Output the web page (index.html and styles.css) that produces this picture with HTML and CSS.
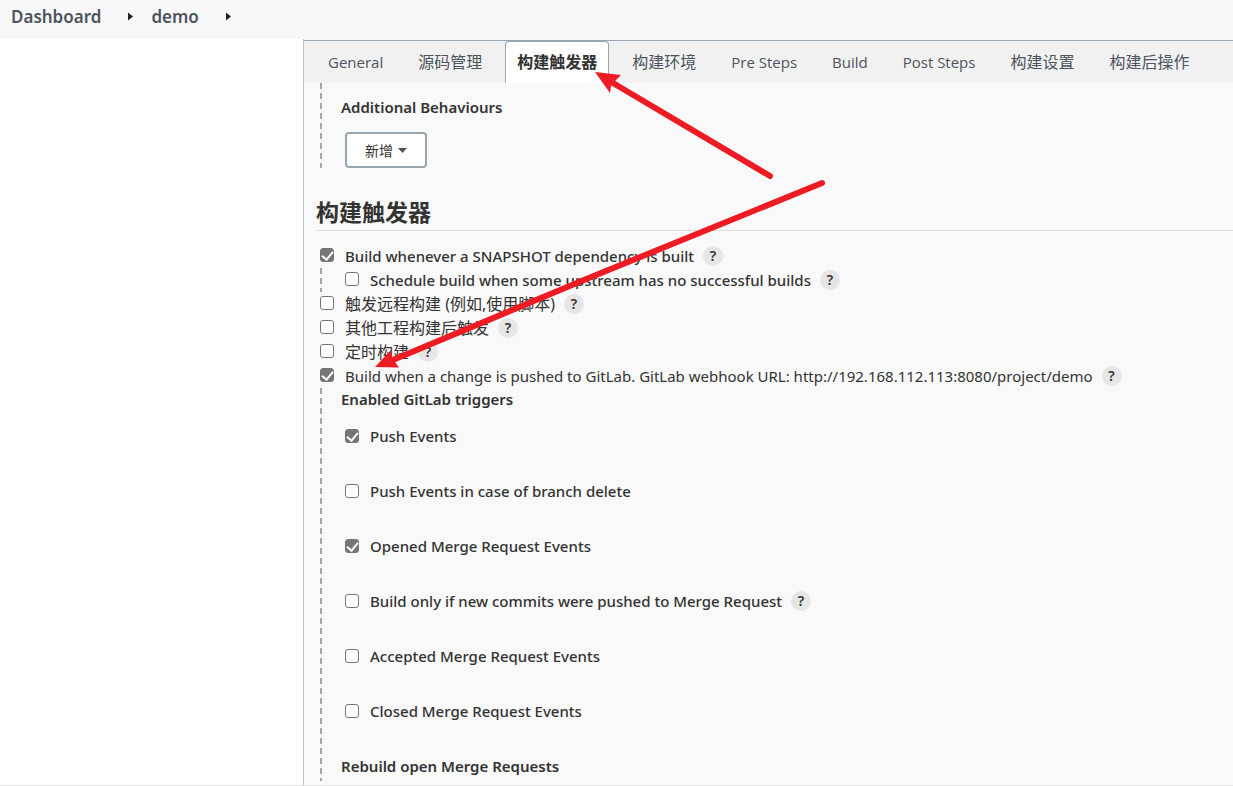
FILE: index.html
```html
<!DOCTYPE html>
<html lang="zh-CN">
<head>
<meta charset="utf-8">
<title>demo Config</title>
<meta name="viewport" content="width=device-width, initial-scale=1">
<link rel="stylesheet" href="styles.css">
</head>
<body>
<nav class="breadcrumbs">
  <a href="#">Dashboard</a>
  <svg class="crumb-arrow" viewBox="0 0 5 8" aria-hidden="true"><path d="M0 0L5 4L0 8Z"/></svg>
  <a href="#">demo</a>
  <svg class="crumb-arrow" viewBox="0 0 5 8" aria-hidden="true"><path d="M0 0L5 4L0 8Z"/></svg>
</nav>
<div class="page">
  <aside class="side"></aside>
  <main class="config">
    <nav class="tabs">
      <a class="tab" href="#">General</a>
      <a class="tab cjk" href="#">源码管理</a>
      <a class="tab cjk active" href="#">构建触发器</a>
      <a class="tab cjk" href="#">构建环境</a>
      <a class="tab" href="#">Pre Steps</a>
      <a class="tab" href="#">Build</a>
      <a class="tab" href="#">Post Steps</a>
      <a class="tab cjk" href="#">构建设置</a>
      <a class="tab cjk" href="#">构建后操作</a>
    </nav>
    <section class="group behaviours">
      <h3 class="group-title">Additional Behaviours</h3>
      <button class="add" type="button">新增<svg class="caret" viewBox="0 0 9 5" aria-hidden="true"><path d="M0 0H9L4.5 5Z"/></svg></button>
    </section>
    <section class="triggers">
      <h2 class="section-title">构建触发器</h2>
      <div class="row"><input class="check" type="checkbox" id="snapshot" checked><label for="snapshot">Build whenever a SNAPSHOT dependency is built</label><button class="help" type="button">?</button></div>
      <div class="group">
        <div class="row nested"><input class="check" type="checkbox" id="upstream"><label for="upstream">Schedule build when some upstream has no successful builds</label><button class="help" type="button">?</button></div>
      </div>
      <div class="row cjk"><input class="check" type="checkbox" id="remote"><label for="remote">触发远程构建 (例如,使用脚本)</label><button class="help" type="button">?</button></div>
      <div class="row cjk"><input class="check" type="checkbox" id="after"><label for="after">其他工程构建后触发</label><button class="help" type="button">?</button></div>
      <div class="row cjk"><input class="check" type="checkbox" id="timer"><label for="timer">定时构建</label><button class="help" type="button">?</button></div>
      <div class="row"><input class="check" type="checkbox" id="gitlab" checked><label class="webhook" for="gitlab">Build when a change is pushed to GitLab. GitLab webhook URL: http://192.168.112.113:8080/project/demo</label><button class="help" type="button">?</button></div>
      <div class="group last">
        <h3 class="group-title">Enabled GitLab triggers</h3>
        <div class="events">
          <div class="event"><input class="check" type="checkbox" id="push" checked><label for="push">Push Events</label></div>
          <div class="event"><input class="check" type="checkbox" id="delete"><label for="delete">Push Events in case of branch delete</label></div>
          <div class="event"><input class="check" type="checkbox" id="opened" checked><label for="opened">Opened Merge Request Events</label></div>
          <div class="event"><input class="check" type="checkbox" id="commits"><label for="commits">Build only if new commits were pushed to Merge Request</label><button class="help" type="button">?</button></div>
          <div class="event"><input class="check" type="checkbox" id="accepted"><label for="accepted">Accepted Merge Request Events</label></div>
          <div class="event"><input class="check" type="checkbox" id="closed"><label for="closed">Closed Merge Request Events</label></div>
        </div>
        <h3 class="group-title">Rebuild open Merge Requests</h3>
      </div>
    </section>
  </main>
</div>
<svg class="arrows" width="840" height="380" viewBox="0 0 840 380" aria-hidden="true">
  <path class="shaft" d="M770 176L613 83M822 183L590 277.500L394 359.500"/>
  <path class="head" d="M595 72L621 75L615 81L611 86L610 93Z"/>
  <path class="head" d="M375 367L391 350L392 357L395 362L399 367.500Z"/>
</svg>
</body>
</html>
```
FILE: styles.css
```css
* { box-sizing: border-box; }
body {
  margin: 0;
  min-height: 100vh;
  display: flex;
  flex-direction: column;
  background: #fff;
  color: #333;
  font: 500 15px/24px "Noto Sans", "Noto Sans CJK SC", sans-serif;
}
a { color: inherit; text-decoration: none; }
h2, h3 { margin: 0; }
button { font-family: inherit; color: inherit; padding: 0; }

.breadcrumbs {
  display: flex;
  align-items: center;
  height: 39px;
  padding: 0 11px 6px;
  background: #f8f8f8;
  color: #4d545d;
  font-size: 17px;
  font-weight: 600;
}
.crumb-arrow { width: 5px; height: 9px; margin: 0 18px 0 27px; fill: #222; }

.page { flex: 1; display: flex; border-bottom: 1px solid #e5e5e5; }
.side { flex: 0 0 303px; }
.config {
  flex: 1;
  min-width: 0;
  padding-top: 1px;
  border-left: 1px solid #bcc4c8;
  background: #f9f9f9;
}

.tabs {
  display: flex;
  gap: 11px;
  height: 43px;
  padding-left: 12px;
  border-top: 1px solid #98a6b0;
  background: #f1f1f1;
  color: #4d545d;
  font-family: "Open Sans", "Noto Sans CJK SC", sans-serif;
  font-weight: 400;
  line-height: 42px;
  white-space: nowrap;
}
.tab { padding: 0 12px; }
.cjk { font-size: 16px; font-weight: 400; }
.tab.active {
  padding: 0 11px;
  border: 1px solid #98a6b0;
  border-bottom: 0;
  border-radius: 4px 4px 0 0;
  background: #fff;
  color: #333;
  font-weight: 700;
  line-height: 40px;
}

.group {
  margin-left: 16px;
  padding-left: 21px;
  background: repeating-linear-gradient(#a6a6a6 0 6px, transparent 6px 10px) 0 0 / 2px 100% no-repeat;
}
.group-title { font-size: 15px; font-weight: 600; line-height: 22px; }
.behaviours { height: 85px; padding-top: 13px; }
.add {
  display: flex;
  align-items: center;
  justify-content: center;
  gap: 5px;
  width: 82px;
  height: 36px;
  margin: 14px 0 0 4px;
  border: 2px solid #98a6b0;
  border-radius: 4px;
  background: #fff;
  font-size: 14px;
}
.caret { width: 9px; height: 5px; fill: #4d545d; }

.triggers { padding: 30px 0 0 12px; }
.triggers .group { margin-left: 4px; }
.section-title {
  height: 33px;
  margin-bottom: 13px;
  border-bottom: 1px solid #ddd;
  font-size: 23px;
  line-height: 28px;
}
.row, .event { display: flex; align-items: center; white-space: nowrap; }
.row { height: 24px; padding-left: 4px; }
.webhook { font-weight: 400; }
.check {
  appearance: none;
  display: flex;
  justify-content: center;
  flex: none;
  width: 14px;
  height: 14px;
  margin: 0 11px 0 0;
  border: 1px solid #767676;
  border-radius: 3px;
  background: #fff;
}
.row .check { margin-bottom: 3px; }
.check:checked { background: #767676; }
.check:checked::before {
  content: "";
  width: 5px;
  height: 9px;
  border: solid #fff;
  border-width: 0 2px 2px 0;
  transform: rotate(40deg);
}
.help {
  width: 20px;
  height: 20px;
  margin-left: 9px;
  border: 0;
  border-radius: 50%;
  background: #e6e6e6;
  font-size: 14px;
  font-weight: 600;
  line-height: 20px;
}
.last { padding-bottom: 4px; }
.events { padding: 10px 0 5px 4px; }
.event { height: 31px; margin-bottom: 24px; }

.arrows { position: absolute; top: 0; left: 0; pointer-events: none; }
.shaft { fill: none; stroke: #ed1c24; stroke-width: 6; stroke-linecap: round; }
.head { fill: #ed1c24; }
```
